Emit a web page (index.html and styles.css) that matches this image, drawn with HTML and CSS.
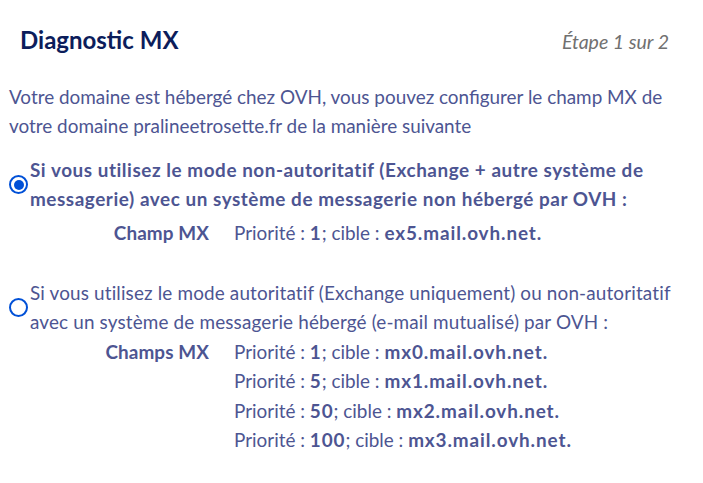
FILE: index.html
```html
<!DOCTYPE html>
<html lang="fr">
<head>
<meta charset="utf-8">
<link rel="stylesheet" href="styles.css">
</head>
<body>
<div class="panel">
  <div class="header">
    <h2 class="title">Diagnostic MX</h2>
    <span class="step">Étape 1 sur 2</span>
  </div>
  <p class="intro">Votre domaine est hébergé chez OVH, vous pouvez configurer le champ MX de<br>votre domaine pralineetrosette.fr de la manière suivante</p>

  <div class="option option-first">
    <div class="option-label">
      <span class="radio checked"></span>
      <span class="label-text strong">Si vous utilisez le mode non-autoritatif (Exchange + autre système de<br>messagerie) avec un système de messagerie non hébergé par OVH :</span>
    </div>
    <div class="records records-first">
      <span class="rec-name">Champ MX</span>
      <span class="rec-val">Priorité : <b>1</b>; cible : <b>ex5.mail.ovh.net.</b></span>
    </div>
  </div>

  <div class="option">
    <div class="option-label">
      <span class="radio"></span>
      <span class="label-text loose">Si vous utilisez le mode autoritatif (Exchange uniquement) ou non-autoritatif<br>avec un système de messagerie hébergé (e-mail mutualisé) par OVH :</span>
    </div>
    <div class="records">
      <span class="rec-name">Champs MX</span>
      <span class="rec-val">Priorité : <b>1</b>; cible : <b>mx0.mail.ovh.net.</b></span>
      <span class="rec-val">Priorité : <b>5</b>; cible : <b>mx1.mail.ovh.net.</b></span>
      <span class="rec-val">Priorité : <b>50</b>; cible : <b>mx2.mail.ovh.net.</b></span>
      <span class="rec-val">Priorité : <b>100</b>; cible : <b>mx3.mail.ovh.net.</b></span>
    </div>
  </div>
</div>
</body>
</html>
```
FILE: styles.css
```css
html, body {
  margin: 0;
  padding: 0;
  background: #ffffff;
}
body {
  font-family: Lato, "Liberation Sans", sans-serif;
  font-size: 18.9px;
  color: #4d5592;
}
.panel {
  padding: 25px 34px 0 9px;
}
.header {
  display: flex;
  justify-content: space-between;
  align-items: baseline;
  padding-left: 11px;
}
.title {
  margin: 0;
  font-size: 24px;
  line-height: 30px;
  font-weight: 700;
  color: #0c1d5b;
}
.step {
  font-style: italic;
  font-size: 19.5px;
  color: #707070;
}
.intro {
  margin: 27px 0 0 0;
  line-height: 29.4px;
}
.option {
  margin-top: 31px;
}
.option-first {
  margin-top: 14px;
}
.option-label {
  display: flex;
  align-items: center;
}
.radio {
  flex: none;
  width: 15px;
  height: 15px;
  border: 2px solid #0050d7;
  border-radius: 50%;
  margin-right: 2px;
  margin-top: 1px;
  display: flex;
  align-items: center;
  justify-content: center;
}
.radio.checked::after {
  content: "";
  width: 10px;
  height: 10px;
  border-radius: 50%;
  background: #0050d7;
}
.label-text {
  line-height: 29.4px;
  white-space: nowrap;
}
.loose {
  letter-spacing: 0.15px;
}
.strong {
  font-weight: 700;
  letter-spacing: 0.55px;
}
.records {
  display: grid;
  grid-template-columns: 179px auto;
  column-gap: 25px;
  line-height: 29.4px;
  white-space: nowrap;
  padding-left: 21px;
}
.records-first {
  margin-top: 4px;
}
.rec-name {
  font-weight: 700;
  text-align: right;
  grid-row: 1;
  letter-spacing: 0.1px;
}
.rec-val {
  grid-column: 2;
}
.rec-val b {
  font-weight: 700;
  letter-spacing: 0.9px;
}
```
